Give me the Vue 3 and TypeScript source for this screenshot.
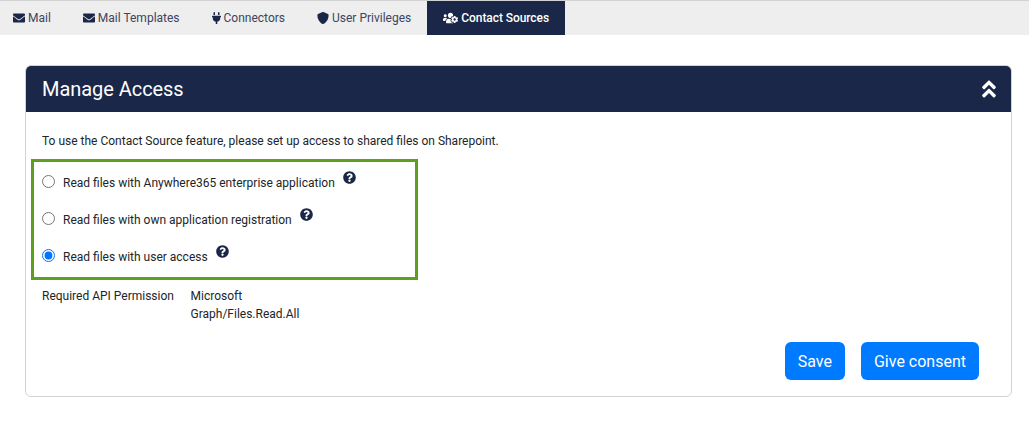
<script setup lang="ts">
import { ref } from 'vue';

const icons = {
  envelope: 'M502.3 190.8c3.9-3.1 9.7-.2 9.7 4.7V400c0 26.5-21.5 48-48 48H48c-26.5 0-48-21.5-48-48V195.6c0-5 5.7-7.8 9.7-4.7 22.4 17.4 52.1 39.5 154.1 113.6 21.1 15.4 56.7 47.8 92.2 47.6 35.7.3 72-32.8 92.3-47.6 102-74.1 131.6-96.3 154-113.7zM256 320c23.2.4 56.6-29.2 73.4-41.4 132.7-96.3 142.8-104.7 173.4-128.7 5.8-4.5 9.2-11.5 9.2-18.9v-19c0-26.5-21.5-48-48-48H48C21.5 64 0 85.5 0 112v19c0 7.4 3.4 14.3 9.2 18.9 30.6 23.9 40.7 32.4 173.4 128.7 16.8 12.2 50.2 41.8 73.4 41.4z',
  plug: 'M320,32a32,32,0,0,0-64,0v96h64Zm48,128H16A16,16,0,0,0,0,176v32a16,16,0,0,0,16,16H32v32A160.07,160.07,0,0,0,160,412.8V512h64V412.8A160.07,160.07,0,0,0,352,256V224h16a16,16,0,0,0,16-16V176A16,16,0,0,0,368,160ZM128,32a32,32,0,0,0-64,0v96h64Z',
  shield: 'M466.5 83.7l-192-80a48.15 48.15 0 0 0-36.9 0l-192 80C27.7 91.1 16 108.6 16 128c0 198.5 114.5 335.7 221.5 380.3 11.8 4.9 25.1 4.9 36.9 0C360.1 472.6 496 349.3 496 128c0-19.4-11.7-36.9-29.5-44.3z',
  usersCog: 'M610.5 341.3c2.6-14.1 2.6-28.5 0-42.6l25.8-14.9c3-1.7 4.3-5.2 3.3-8.5-6.7-21.6-18.2-41.2-33.2-57.4-2.3-2.5-6-3.1-9-1.4l-25.8 14.9c-10.9-9.3-23.4-16.5-36.9-21.3v-29.8c0-3.4-2.4-6.4-5.7-7.1-22.3-5-45-4.8-66.2 0-3.3.7-5.7 3.7-5.7 7.1v29.8c-13.5 4.8-26 12-36.9 21.3l-25.8-14.9c-2.9-1.7-6.7-1.1-9 1.4-15 16.2-26.5 35.8-33.2 57.4-1 3.3.4 6.8 3.3 8.5l25.8 14.9c-2.6 14.1-2.6 28.5 0 42.6l-25.8 14.9c-3 1.7-4.3 5.2-3.3 8.5 6.7 21.6 18.2 41.1 33.2 57.4 2.3 2.5 6 3.1 9 1.4l25.8-14.9c10.9 9.3 23.4 16.5 36.9 21.3v29.8c0 3.4 2.4 6.4 5.7 7.1 22.3 5 45 4.8 66.2 0 3.3-.7 5.7-3.7 5.7-7.1v-29.8c13.5-4.8 26-12 36.9-21.3l25.8 14.9c2.9 1.7 6.7 1.1 9-1.4 15-16.2 26.5-35.8 33.2-57.4 1-3.3-.4-6.8-3.3-8.5l-25.8-14.9zM496 368.5c-26.8 0-48.5-21.8-48.5-48.5s21.8-48.5 48.5-48.5 48.5 21.8 48.5 48.5-21.7 48.5-48.5 48.5zM96 224c35.3 0 64-28.7 64-64s-28.7-64-64-64-64 28.7-64 64 28.7 64 64 64zm224 32c1.9 0 3.7-.5 5.6-.6 8.3-21.7 20.5-42.1 36.3-59.2 7.4-8 17.9-12.6 28.9-12.6 6.9 0 13.7 1.8 19.6 5.3l7.9 4.6c.8-.5 1.6-.9 2.4-1.4 7-14.6 11.2-30.8 11.2-48 0-61.9-50.1-112-112-112S208 82.1 208 144c0 61.9 50.1 112 112 112zm105.2 194.5c-2.3-1.2-4.6-2.6-6.8-3.9-8.2 4.8-15.3 9.8-27.5 9.8-10.9 0-21.4-4.6-28.9-12.6-18.3-19.8-32.3-43.9-40.2-69.6-10.7-34.5 24.9-49.7 25.8-50.3-.1-2.6-.1-5.2 0-7.8l-7.9-4.6c-3.8-2.2-7-5-9.8-8.1-3.3.2-6.5.6-9.8.6-24.6 0-47.6-6-68.5-16h-8.3C179.6 288 128 339.6 128 403.2V432c0 26.5 21.5 48 48 48h255.4c-3.7-6-6.2-12.8-6.2-20.3v-9.2zM173.1 274.6C161.5 263.1 145.6 256 128 256H64c-35.3 0-64 28.7-64 64v32c0 17.7 14.3 32 32 32h65.9c6.3-47.4 34.9-87.3 75.2-109.4z',
};
const question = 'M504 256c0 136.997-111.043 248-248 248S8 392.997 8 256C8 119.083 119.043 8 256 8s248 111.083 248 248zM262.655 90c-54.497 0-89.255 22.957-116.549 63.758-3.536 5.286-2.353 12.415 2.715 16.258l34.699 26.31c5.205 3.947 12.621 3.008 16.665-2.122 17.864-22.658 30.113-35.797 57.303-35.797 20.429 0 45.698 13.148 45.698 32.958 0 14.976-12.363 22.667-32.534 33.976C247.128 238.528 216 254.941 216 296v4c0 6.627 5.373 12 12 12h56c6.627 0 12-5.373 12-12v-1.333c0-28.462 83.186-29.647 83.186-106.667 0-58.002-60.165-102-116.531-102zM256 338c-25.365 0-46 20.635-46 46 0 25.364 20.635 46 46 46s46-20.636 46-46c0-25.365-20.635-46-46-46z';

const tabs = [
  { label: 'Mail', path: icons.envelope, box: '0 0 512 512', width: 12 },
  { label: 'Mail Templates', path: icons.envelope, box: '0 0 512 512', width: 12 },
  { label: 'Connectors', path: icons.plug, box: '0 0 384 512', width: 9 },
  { label: 'User Privileges', path: icons.shield, box: '0 0 512 512', width: 12 },
  { label: 'Contact Sources', path: icons.usersCog, box: '0 0 640 512', width: 15 },
];
const activeTab = ref('Contact Sources');

const options = [
  { value: 'enterprise', label: 'Read files with Anywhere365 enterprise application' },
  { value: 'own', label: 'Read files with own application registration' },
  { value: 'user', label: 'Read files with user access' },
];
const access = ref('user');
</script>

<template>
  <div class="page">
    <nav class="tabs">
      <a
        v-for="tab in tabs"
        :key="tab.label"
        class="tab"
        :class="{ active: tab.label === activeTab }"
        @click="activeTab = tab.label"
      >
        <svg :viewBox="tab.box" :width="tab.width" height="12" preserveAspectRatio="xMidYMid meet">
          <path :d="tab.path" fill="currentColor" />
        </svg>
        <span>{{ tab.label }}</span>
      </a>
    </nav>

    <section class="card">
      <header class="card-header">
        <h2>Manage Access</h2>
        <svg viewBox="0 0 320 512" width="14" height="22">
          <path
            fill="#fff"
            d="M177 255.7l136 136c9.4 9.4 9.4 24.6 0 33.9l-22.6 22.6c-9.4 9.4-24.6 9.4-33.9 0L160 351.9l-96.4 96.4c-9.4 9.4-24.6 9.4-33.9 0L7 425.7c-9.4-9.4-9.4-24.6 0-33.9l136-136c9.4-9.5 24.6-9.5 34-.1zm-34-192L7 199.7c-9.4 9.4-9.4 24.6 0 33.9l22.6 22.6c9.4 9.4 24.6 9.4 33.9 0l96.4-96.4 96.4 96.4c9.4 9.4 24.6 9.4 33.9 0l22.6-22.6c9.4-9.4 9.4-24.6 0-33.9l-136-136c-9.2-9.4-24.4-9.4-33.8 0z"
          />
        </svg>
      </header>

      <div class="card-body">
        <p class="intro">To use the Contact Source feature, please set up access to shared files on Sharepoint.</p>

        <div class="options">
          <label v-for="option in options" :key="option.value" class="option">
            <input v-model="access" type="radio" name="access" :value="option.value" />
            <span class="option-label">{{ option.label }}</span>
            <svg class="help" viewBox="0 0 512 512" width="13" height="13">
              <path :d="question" fill="#1a2749" />
            </svg>
          </label>
        </div>

        <div class="permission">
          <span class="permission-name">Required API Permission</span>
          <span class="permission-value">Microsoft Graph/Files.Read.All</span>
        </div>

        <div class="actions">
          <button type="button">Save</button>
          <button type="button">Give consent</button>
        </div>
      </div>
    </section>
  </div>
</template>

<style>
body {
  background: #fff;
}
</style>

<style scoped>
.page {
  font-family: Roboto, "Liberation Sans", sans-serif;
  font-size: 12px;
  color: #212529;
}

.tabs {
  display: flex;
  height: 34px;
  background: #eee;
  border-top: 1px solid #d2d2d2;
}

.tab {
  display: flex;
  align-items: center;
  gap: 3px;
  padding: 0 16px;
  color: #3b4560;
  cursor: pointer;
}

.tab:first-child {
  padding-left: 13px;
}

.tab svg {
  color: #1a2749;
}

.tab.active {
  background: #1a2749;
  color: #fff;
  font-weight: 500;
  letter-spacing: -0.07px;
}

.tab.active svg {
  color: #fff;
}

.card {
  margin: 30px 17px 0 25px;
  border: 1px solid #d2d2d2;
  border-radius: 6px;
  overflow: hidden;
}

.card-header {
  display: flex;
  align-items: center;
  justify-content: space-between;
  height: 46px;
  padding: 0 15px 0 16px;
  background: #1a2749;
  color: #fff;
}

.card-header h2 {
  margin: 0;
  font-size: 20px;
  font-weight: 400;
  letter-spacing: -0.05px;
}

.card-body {
  padding: 20px 16px 16px;
}

.intro {
  margin: 0 0 9px;
  line-height: 18px;
}

.options {
  display: flex;
  flex-direction: column;
  box-sizing: border-box;
  width: 387px;
  height: 121px;
  margin-left: -11px;
  padding: 1px 8px 0;
  border: 3px solid #5f9f20;
}

.option {
  display: flex;
  align-items: center;
  height: 37px;
  cursor: pointer;
}

.option input {
  width: 13px;
  height: 13px;
  margin: 0 8px 0 0;
}

.option-label {
  line-height: 18px;
  padding-top: 2px;
}

.help {
  margin: -9px 0 0 8px;
}

.permission {
  display: flex;
  margin-top: 7px;
  line-height: 18px;
}

.permission-name {
  width: 148.5px;
}

.permission-value {
  width: 130px;
}

.actions {
  display: flex;
  justify-content: flex-end;
  gap: 16px;
  margin-top: 19px;
  padding-right: 16px;
}

.actions button {
  height: 38px;
  padding: 0 13px;
  border: none;
  border-radius: 6px;
  background: #007bff;
  color: #fff;
  font-family: inherit;
  font-size: 16px;
  cursor: pointer;
}
</style>
